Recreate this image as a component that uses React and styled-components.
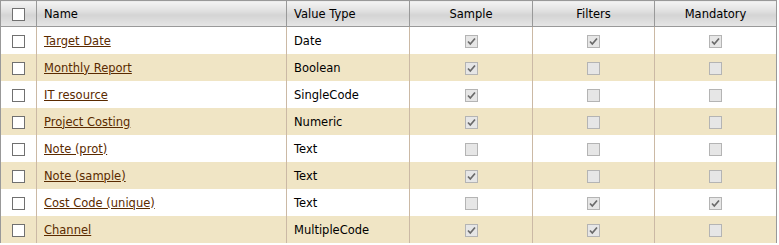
import React from 'react';
import styled, { createGlobalStyle } from 'styled-components';

const GlobalStyle = createGlobalStyle`
  body {
    margin: 0;
    background: #fff;
    font-family: Tahoma, "DejaVu Sans", Verdana, sans-serif;
  }
`;

const Grid = styled.table`
  width: 777px;
  border-collapse: collapse;
  table-layout: fixed;
  border: 1px solid #999;
  border-bottom: none;
  font-size: 11.5px;
  color: #000;
`;

const HeadCell = styled.th`
  height: 25px;
  padding: 0 7px;
  font-weight: normal;
  text-align: ${props => (props.center ? 'center' : 'left')};
  border-left: 1px solid #999;
  border-bottom: 1px solid #999;
  background: linear-gradient(#f4f4f4 0%, #e2e2e2 35%, #d4d4d4 55%, #e6e6e6 100%);
  &:first-child {
    border-left: none;
    padding: 0;
    text-align: center;
  }
`;

const Row = styled.tr`
  background: ${props => (props.alt ? '#f0e5c5' : '#fff')};
`;

const Cell = styled.td`
  height: 27px;
  padding: 0 7px;
  text-align: ${props => (props.center ? 'center' : 'left')};
  border-left: 1px solid #cbb9a5;
  vertical-align: middle;
  &:first-child {
    border-left: none;
    padding: 0;
    text-align: center;
  }
`;

const NameLink = styled.a`
  color: #5a2a00;
  text-decoration: underline;
  cursor: pointer;
`;

const Box = styled.span`
  display: inline-block;
  vertical-align: middle;
  box-sizing: border-box;
  width: 13px;
  height: 13px;
  border: 1px solid ${props => (props.disabled ? '#b4b4b4' : '#707070')};
  background: ${props => (props.disabled ? '#e6e6e6' : '#fff')};
  position: relative;
`;

const Check = () => (
  <svg width="11" height="11" viewBox="0 0 11 11" style={{ position: 'absolute', left: 0, top: 0 }}>
    <path d="M2 5.5 L4.3 8 L9 2.5" fill="none" stroke="#6a6a6a" strokeWidth="1.7" />
  </svg>
);

const CheckBox = ({ checked, disabled }) => (
  <Box disabled={disabled}>{checked && <Check />}</Box>
);

const rows = [
  { name: 'Target Date', type: 'Date', s: true, f: true, m: true },
  { name: 'Monthly Report', type: 'Boolean', s: true, f: false, m: false },
  { name: 'IT resource', type: 'SingleCode', s: true, f: false, m: false },
  { name: 'Project Costing', type: 'Numeric', s: true, f: false, m: false },
  { name: 'Note (prot)', type: 'Text', s: false, f: false, m: false },
  { name: 'Note (sample)', type: 'Text', s: true, f: false, m: false },
  { name: 'Cost Code (unique)', type: 'Text', s: false, f: true, m: true },
  { name: 'Channel', type: 'MultipleCode', s: true, f: true, m: false },
];

const App = () => (
  <>
    <GlobalStyle />
    <Grid>
      <colgroup>
        <col style={{ width: 36 }} />
        <col style={{ width: 250 }} />
        <col style={{ width: 123 }} />
        <col style={{ width: 123 }} />
        <col style={{ width: 122 }} />
        <col style={{ width: 122 }} />
      </colgroup>
      <thead>
        <tr>
          <HeadCell><CheckBox /></HeadCell>
          <HeadCell>Name</HeadCell>
          <HeadCell>Value Type</HeadCell>
          <HeadCell center>Sample</HeadCell>
          <HeadCell center>Filters</HeadCell>
          <HeadCell center>Mandatory</HeadCell>
        </tr>
      </thead>
      <tbody>
        {rows.map((r, i) => (
          <Row key={r.name} alt={i % 2 === 1}>
            <Cell><CheckBox /></Cell>
            <Cell><NameLink>{r.name}</NameLink></Cell>
            <Cell>{r.type}</Cell>
            <Cell center><CheckBox disabled checked={r.s} /></Cell>
            <Cell center><CheckBox disabled checked={r.f} /></Cell>
            <Cell center><CheckBox disabled checked={r.m} /></Cell>
          </Row>
        ))}
      </tbody>
    </Grid>
  </>
);

export default App;
